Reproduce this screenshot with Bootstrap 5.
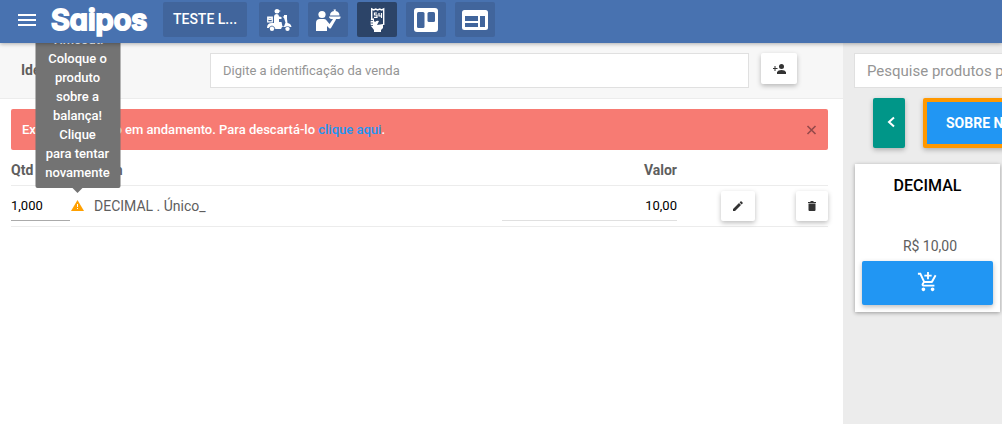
<!DOCTYPE html>
<html lang="pt-BR">
<head>
<meta charset="utf-8">
<meta name="viewport" content="width=device-width, initial-scale=1">
<title>Saipos</title>
<link href="https://cdn.jsdelivr.net/npm/bootstrap@5.3.0/dist/css/bootstrap.min.css" rel="stylesheet">
<style>
  body { font: 400 14px/20px Roboto, "Liberation Sans", sans-serif; color: #5e5e5e; background: #fff; min-height: 100vh; overflow: hidden; }
  .btn, .form-control { font-family: inherit; border-radius: 2px; }
  .topbar { height: 43px; background: #4872b0; z-index: 1050; box-shadow: 0 1px 4px rgba(0,0,0,.3); padding: 2px 0 0 17px; }
  .menu-btn { width: 20px; height: 35px; margin-right: 14px; }
  .brand { font: 600 29px/36px Inter, sans-serif; font-feature-settings: "cv11"; color: #fff; width: 96px; white-space: nowrap; -webkit-text-stroke: 2px #fff; }
  .nav-tile { width: 40px; height: 35px; background: #41659c; color: #fff; margin-right: 9px; }
  .nav-tile:hover { background: #3a5b8d; color: #fff; }
  .nav-tile.active { background: #2c4468; }
  .store-btn { width: 84px; margin-right: 12px; font-size: 14px; font-weight: 500; }
  .workspace { display: grid; grid-template-columns: minmax(0, 1fr) 159px; min-height: calc(100vh - 43px); }
  .ident { background: #f7f7f7; border-bottom: 1px solid #ececec; padding: 10px 46px 10px 21px; }
  .ident label { width: 189px; line-height: 35px; font-weight: 700; }
  .field { height: 35px; border: 1px solid #e0e0e0; border-radius: 0; padding: 0 12px; font-size: 13px; }
  .field::placeholder { color: #959595; }
  .client-btn { width: 36px; height: 31px; margin-left: 12px; }
  .raised, .raised:hover { background: #fff; color: #333; box-shadow: 0 2px 5px rgba(0,0,0,.26); }
  .sale { padding: 10px 15px 0 11px; }
  .notice { height: 41px; background: #f77b73; color: #fff; border-radius: 2px; padding: 0 11px; font-size: 13px; font-weight: 500; }
  .notice a { color: #2196f3; text-decoration: none; }
  .items { table-layout: fixed; }
  .items th { height: 35px; padding: 5px 0 0; font-weight: 700; vertical-align: middle; }
  .items td { height: 41px; padding: 0; vertical-align: middle; }
  .items tr { border-bottom: 1px solid #ececec; }
  .items th, .items td { text-align: left; }
  .items .num { text-align: right; }
  .c-qty { width: 83px; } .c-val { width: 175px; } .c-edit { width: 78px; } .c-del { width: 73px; }
  .line { height: 30px; border: 0; border-bottom: 1px solid #e0e0e0; padding: 0; font-size: 13px; color: #000; background: transparent; outline: 0; }
  .line.qty { width: 59px; border-color: #aaa; }
  .small-btn { width: 34px; height: 30px; }
  .del-btn { width: 32px; }
  .hint { position: absolute; left: 50%; bottom: 23px; transform: translateX(-50%); width: 85px; background: #737373; color: #fff; border-radius: 2px; padding: 5px 8px 6px; font-size: 13px; line-height: 19px; font-weight: 500; text-align: center; z-index: 1030; }
  .hint::after { content: ""; position: absolute; left: 50%; top: 100%; margin-left: -5px; border: 5px solid transparent; border-top-color: #737373; border-bottom: 0; }
  .catalog { background: #ececec; overflow: hidden; padding: 10px 0 0 11px; }
  .catalog .field { width: 320px; font-size: 15px; }
  .cats { margin: 10px 0 16px 19px; width: 320px; }
  .prev, .prev:hover { width: 32px; height: 50px; background: #009688; margin-right: 18px; box-shadow: 0 2px 5px rgba(0,0,0,.26); }
  .cat, .cat:hover { height: 50px; background: #2196f3; border: 4px solid #ff9800; color: #fff; font-weight: 700; font-size: 14px; padding: 0 19px; box-shadow: 0 2px 5px rgba(0,0,0,.26); white-space: nowrap; }
  .product { width: 145px; height: 148px; margin-left: 1px; padding: 12px 7px 7px; background: #fff; box-shadow: 0 1px 4px rgba(0,0,0,.35); }
  .product h2 { font-size: 16px; line-height: 20px; font-weight: 500; color: #000; margin: 0; }
  .price { padding: 0 0 5px 5px; }
  .add, .add:hover { height: 44px; background: #2196f3; box-shadow: 0 2px 5px rgba(0,0,0,.26); }
</style>
</head>
<body>
<header class="topbar position-relative d-flex align-items-start">
  <button class="btn menu-btn border-0 p-0 d-flex align-items-center" aria-label="Menu">
    <svg width="20" height="14" fill="#fff"><path d="M1 1h18v2H1zM1 6h18v2H1zM1 11h18v2H1z"/></svg>
  </button>
  <a class="brand text-decoration-none" href="#">Saipos</a>
  <nav class="d-flex ms-3" aria-label="Principal">
    <button class="btn nav-tile store-btn border-0 p-0">TESTE L...</button>
    <button class="btn nav-tile border-0 p-0" aria-label="Entregas">
      <svg width="26" height="24" viewBox="0 0 26 24" fill="#fff"><path d="M8.500 3.500q0-2.500 2.500-2.500 2 0 2.500 1.500l1.500.5-1.500.5q0 2-2.500 2t-2.500-2z"/><path d="M8 15V9q0-3 3-3 2 0 2 2.500l2.500.5v2H13v3h2.500l1 4.500h1.500l1.500-4L18 10l-1.500-1.500H18V7h3v4l.5 4q3.500.5 4 4H16l-1 2H9q-.5-2.500-3-2.500-2 0-3 1.500H1q0-5 5-5z"/><path d="M1.700 9.200h4.600v4.600H1.700zM3 9.500h2v2H3z" fill="none" stroke="#fff" stroke-width="1.200"/><circle cx="6" cy="20.800" r="2.200"/><circle cx="21.500" cy="20.800" r="2.200"/><path d="M3 20q1-2 3-2t3 2.500M18.500 20.500q.5-2 3-2t3 1.500" fill="none" stroke="#41659c" stroke-width=".7"/></svg>
    </button>
    <button class="btn nav-tile border-0 p-0" aria-label="Mesas">
      <svg width="26" height="24" viewBox="0 0 26 24" fill="#fff"><circle cx="7" cy="6.500" r="3.600"/><path d="M1 23v-8q0-4 4-4h4q2 0 3 2l2.500 3L18 11h-2.500v-1.500H20l1 2-5 8.500q-1 1-2 0l-2-2v5zM14 8.500h11.500v1q0 1.500-3 1.500H17q-3-.5-3-2.500zM15 7.500q0-4 4-4.500l-.5-1.500h2.500L20.500 3q4 .5 4 4.500z"/></svg>
    </button>
    <button class="btn nav-tile active border-0 p-0" aria-label="Comandas">
      <svg width="18" height="26" viewBox="0 0 18 26" fill="none"><path d="M3.700 12V2l2 1 2-1 2 1 2-1 2 1 2-1v16" stroke="#fff" stroke-width="1.400"/><path d="M3 11.500h3v2.500l1 1q2-2 4-1l-2 4 6-1v4l-2 2v2H6v-2l-3-4q-1-3 0-7.500z" fill="#fff"/><path d="M2 13.500h3M2 16h3M2 18.500h3" stroke="#2c4468" stroke-width=".8"/><path d="M9 6H6.500v2H9v2.300H6M11 6v3h3M13.500 6v5" stroke="#fff" stroke-width="1.200"/></svg>
    </button>
    <button class="btn nav-tile border-0 p-0" aria-label="Quadro">
      <svg width="24" height="24" viewBox="0 0 24 24"><rect width="24" height="24" rx="3" fill="#fff"/><rect x="3" y="4" width="7.500" height="16" rx="1.500" fill="#41659c"/><rect x="13.500" y="4" width="7.500" height="10" rx="1.500" fill="#41659c"/></svg>
    </button>
    <button class="btn nav-tile border-0 p-0" aria-label="Painel">
      <svg width="26" height="22" viewBox="0 0 26 22"><rect y="1" width="26" height="20" rx="2.500" fill="#fff"/><path fill="#41659c" d="M3 7h13v5H3zM3 14h13v4H3zM18 7h5v11h-5z"/></svg>
    </button>
  </nav>
</header>

<main class="workspace">
  <section>
    <div class="ident d-flex align-items-start">
      <label for="ident">Identificação</label>
      <div class="flex-grow-1"><input id="ident" class="form-control field" placeholder="Digite a identificação da venda"></div>
      <button class="btn raised client-btn border-0 p-0 d-flex align-items-center justify-content-center" aria-label="Adicionar cliente">
        <svg width="13" height="10" viewBox="0 0 13 10" fill="#333"><circle cx="8.500" cy="2.500" r="2.500"/><path d="M4 10V8q1-2 4.500-2T13 8v2zM1.500 2h1v2h2v1h-2v2h-1V5H0V4h1.500z"/></svg>
      </button>
    </div>
    <div class="sale">
      <div class="notice d-flex align-items-center justify-content-between" role="alert">
        <span>Existe um pedido em andamento. Para descartá-lo <a href="#">clique aqui</a>.</span>
        <button class="btn border-0 p-0 d-flex" aria-label="Fechar">
          <svg width="11" height="11" viewBox="0 0 11 11" stroke="#94494a" stroke-width="1.600"><path d="M1.500 2l8 8m0-8l-8 8"/></svg>
        </button>
      </div>
      <table class="items w-100">
        <colgroup><col class="c-qty"><col><col class="c-val"><col class="c-edit"><col class="c-del"></colgroup>
        <thead><tr><th>Qtd</th><th>Item</th><th class="num">Valor</th><th></th><th></th></tr></thead>
        <tbody>
          <tr>
            <td>
              <div class="d-flex align-items-center">
                <input class="line qty" value="1,000" aria-label="Quantidade">
                <span class="position-relative d-flex">
                  <svg width="15" height="11" viewBox="0 0 15 11"><path d="M7.500 0L14 11H1z" fill="#ffa000"/><path d="M7 4h1v3H7zM7 8h1v1H7z" fill="#fff"/></svg>
                  <span class="hint" role="tooltip">Timeout! Coloque o produto sobre a balança! Clique<br>para tentar novamente</span>
                </span>
              </div>
            </td>
            <td>DECIMAL . Único_</td>
            <td><input class="line num w-100" value="10,00" aria-label="Valor"></td>
            <td class="num"><button class="btn raised small-btn border-0 p-0" aria-label="Editar">
              <svg width="10" height="10" viewBox="0 0 10 10" fill="#333"><path d="M0 8l6-6 2 2-6 6H0zM6.600 1.400L8 0l2 2-1.400 1.400z"/></svg></button></td>
            <td class="num"><button class="btn raised small-btn del-btn border-0 p-0" aria-label="Excluir">
              <svg width="8" height="10" viewBox="0 0 8 10" fill="#333"><path d="M0 1h2l1-1h2l1 1h2v1H0zM.5 2.500h7V9q0 1-1 1h-5q-1 0-1-1z"/></svg></button></td>
          </tr>
        </tbody>
      </table>
    </div>
  </section>

  <aside class="catalog">
    <input class="form-control field" placeholder="Pesquise produtos pelo nome" aria-label="Pesquisar produtos">
    <div class="cats d-flex">
      <button class="btn prev border-0 pt-0 pb-1 pe-0 ps-1" aria-label="Anterior">
        <svg width="8" height="12" viewBox="0 0 8 12" fill="none" stroke="#fff" stroke-width="2"><path d="M7 1.500L2 6l5 4.500"/></svg>
      </button>
      <button class="btn cat">SOBRE NÓS</button>
    </div>
    <article class="product d-flex flex-column text-center">
      <h2>DECIMAL</h2>
      <span class="price mt-auto">R$ 10,00</span>
      <button class="btn add border-0 px-0 pt-0 pb-1 w-100" aria-label="Adicionar ao carrinho">
        <svg width="22" height="22" viewBox="0 0 24 24" fill="#fff"><path d="M11 9h2V6h3V4h-3V1h-2v3H8v2h3v3zm-4 9c-1.100 0-2 .9-2 2s.9 2 2 2 2-.9 2-2-.9-2-2-2zm10 0c-1.100 0-2 .9-2 2s.9 2 2 2 2-.9 2-2-.9-2-2-2zM7.200 14.800l.9-1.600h7.500c.7 0 1.400-.4 1.700-1l3.900-7L19.400 4l-3.900 7h-7L4.300 2H1v2h2l3.600 7.600L5.200 14c-.7 1.300.3 3 1.800 3h12v-2H7.400z"/></svg>
      </button>
    </article>
  </aside>
</main>
<script src="https://cdn.jsdelivr.net/npm/bootstrap@5.3.0/dist/js/bootstrap.bundle.min.js"></script>
</body>
</html>
